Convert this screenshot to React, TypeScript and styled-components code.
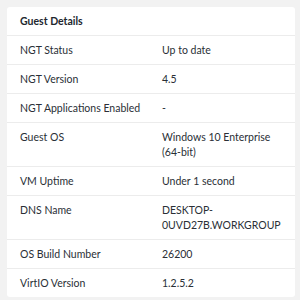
import React from "react";
import styled, { createGlobalStyle } from "styled-components";

const Global = createGlobalStyle`
  html, body { margin: 0; padding: 0; background: #f2f2f2; }
  body { font-family: Lato, "Open Sans", "Liberation Sans", sans-serif; color: #22272e; }
`;

const Page = styled.div`
  padding: 7px 5px 5px 7px;
  width: 300px;
  height: 300px;
  box-sizing: border-box;
`;

const Card = styled.section`
  background: #ffffff;
  border-radius: 3px;
  overflow: hidden;
`;

const Header = styled.h2`
  margin: 0;
  height: 28px;
  display: flex;
  align-items: center;
  padding: 0 13px;
  font-size: 10.5px;
  font-weight: 700;
  color: #22272e;
`;

const Row = styled.div`
  display: grid;
  grid-template-columns: 142px 1fr;
  padding: 6.5px 13px;
  border-top: 1px solid #ececec;
  font-size: 10.5px;
  line-height: 15px;
`;

const Label = styled.div`
  color: #2a2f36;
`;

const Value = styled.div`
  color: #2a2f36;
`;

const rows: [string, string][] = [
  ["NGT Status", "Up to date"],
  ["NGT Version", "4.5"],
  ["NGT Applications Enabled", "-"],
  ["Guest OS", "Windows 10 Enterprise (64-bit)"],
  ["VM Uptime", "Under 1 second"],
  ["DNS Name", "DESKTOP-0UVD27B.WORKGROUP"],
  ["OS Build Number", "26200"],
  ["VirtIO Version", "1.2.5.2"],
];

export default function App() {
  return (
    <>
      <Global />
      <Page>
        <Card>
          <Header>Guest Details</Header>
          {rows.map(([k, v]) => (
            <Row key={k}>
              <Label>{k}</Label>
              <Value>{v}</Value>
            </Row>
          ))}
        </Card>
      </Page>
    </>
  );
}
